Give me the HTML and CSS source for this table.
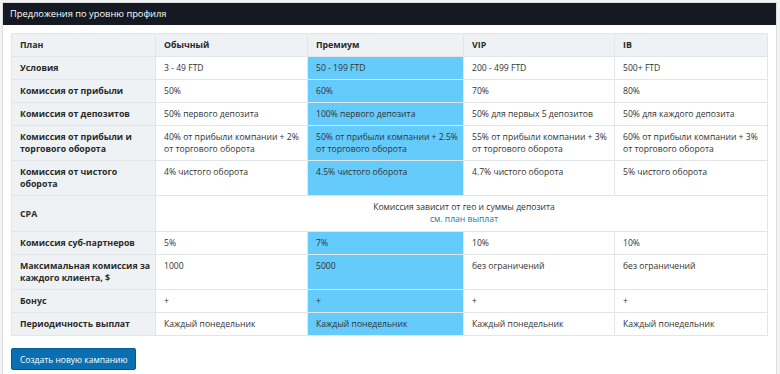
FILE: index.html
```html
<!DOCTYPE html>
<html lang="ru">
<head>
<meta charset="utf-8">
<link rel="stylesheet" href="styles.css">
</head>
<body>
<div class="panel">
  <div class="panel-head">Предложения по уровню профиля</div>
  <div class="panel-body">
    <table class="plans">
      <colgroup>
        <col class="c0"><col class="c1"><col class="c2"><col class="c3"><col class="c4">
      </colgroup>
      <tr class="head">
        <th>План</th><th>Обычный</th><th>Премиум</th><th>VIP</th><th>IB</th>
      </tr>
      <tr>
        <th>Условия</th><td>3 - 49 FTD</td><td class="hl">50 - 199 FTD</td><td>200 - 499 FTD</td><td>500+ FTD</td>
      </tr>
      <tr>
        <th>Комиссия от прибыли</th><td>50%</td><td class="hl">60%</td><td>70%</td><td>80%</td>
      </tr>
      <tr>
        <th>Комиссия от депозитов</th><td>50% первого депозита</td><td class="hl">100% первого депозита</td><td>50% для первых 5 депозитов</td><td>50% для каждого депозита</td>
      </tr>
      <tr>
        <th>Комиссия от прибыли и торгового оборота</th><td>40% от прибыли компании + 2% от торгового оборота</td><td class="hl">50% от прибыли компании + 2.5% от торгового оборота</td><td>55% от прибыли компании + 3% от торгового оборота</td><td>60% от прибыли компании + 3% от торгового оборота</td>
      </tr>
      <tr>
        <th>Комиссия от чистого оборота</th><td>4% чистого оборота</td><td class="hl">4.5% чистого оборота</td><td>4.7% чистого оборота</td><td>5% чистого оборота</td>
      </tr>
      <tr>
        <th class="mid">CPA</th><td colspan="4" class="center">Комиссия зависит от гео и суммы депозита<br><a href="#" class="link">см. план выплат</a></td>
      </tr>
      <tr>
        <th>Комиссия суб-партнеров</th><td>5%</td><td class="hl">7%</td><td>10%</td><td>10%</td>
      </tr>
      <tr>
        <th>Максимальная комиссия за каждого клиента, $</th><td>1000</td><td class="hl">5000</td><td>без ограничений</td><td>без ограничений</td>
      </tr>
      <tr>
        <th>Бонус</th><td>+</td><td class="hl">+</td><td>+</td><td>+</td>
      </tr>
      <tr>
        <th>Периодичность выплат</th><td>Каждый понедельник</td><td class="hl">Каждый понедельник</td><td>Каждый понедельник</td><td>Каждый понедельник</td>
      </tr>
    </table>
    <button class="btn">Создать новую кампанию</button>
  </div>
</div>
</body>
</html>
```
FILE: styles.css
```css
html, body {
  margin: 0;
  padding: 0;
  background: #f2f3f4;
  font-family: "Open Sans", "Noto Sans", sans-serif;
}
.panel {
  margin: 2px 0 0 2px;
  width: 775px;
  height: 380px;
  background: #fff;
  border: 1px solid #dcdcdc;
  box-sizing: border-box;
}
.panel-head {
  background: #141922;
  color: #fff;
  font-size: 9.3px;
  height: 22px;
  line-height: 22px;
  padding-left: 7px;
}
.panel-body {
  padding: 8px 8px 0 8px;
}
.plans {
  width: 756px;
  border-collapse: collapse;
  table-layout: fixed;
  font-size: 8.6px;
  line-height: 12px;
  color: #333;
}
.c0 { width: 144px; }
.c1 { width: 152px; }
.c2 { width: 156px; }
.c3 { width: 151px; }
.c4 { width: 153px; }
.plans th, .plans td {
  border: 1px solid #e3e6e8;
  padding: 5px 3px 5px 8px;
  text-align: left;
  vertical-align: top;
}
.plans th {
  background: #eef2f4;
  font-size: 8.8px;
  font-weight: 700;
  color: #2a2a2a;
}
.plans td.hl {
  background: #64cbfb;
}
.plans th.mid {
  vertical-align: middle;
}
.plans td.center {
  text-align: center;
  padding-top: 5px;
  padding-bottom: 6px;
}
.link {
  color: #2478b5;
  text-decoration: none;
}
.btn {
  margin-top: 12px;
  background: #0a6fb0;
  border: 1px solid #07598e;
  border-radius: 2px;
  color: #fff;
  font-family: "Open Sans", "Noto Sans", sans-serif;
  font-size: 8.5px;
  height: 22px;
  padding: 0 8px;
  white-space: nowrap;
}
```
